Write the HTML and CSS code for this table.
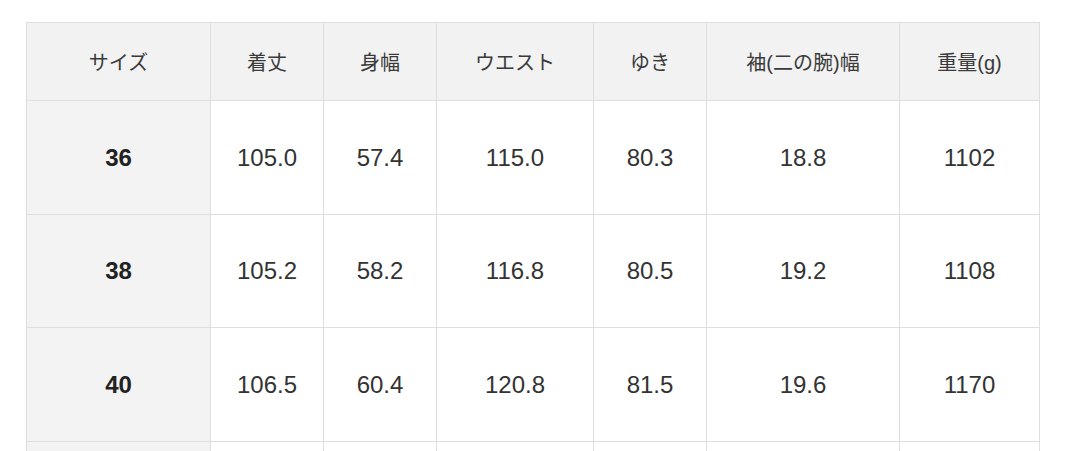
FILE: index.html
```html
<!DOCTYPE html>
<html lang="ja">
<head>
<meta charset="utf-8">
<title>サイズ表</title>
<link rel="stylesheet" href="styles.css">
</head>
<body>
<div class="wrap">
  <table class="size-table">
    <colgroup>
      <col class="c-size">
      <col class="c-n">
      <col class="c-n">
      <col class="c-w">
      <col class="c-n">
      <col class="c-s">
      <col class="c-g">
    </colgroup>
    <thead>
      <tr class="head-row">
        <th>サイズ</th>
        <th>着丈</th>
        <th>身幅</th>
        <th>ウエスト</th>
        <th>ゆき</th>
        <th>袖(二の腕)幅</th>
        <th>重量(g)</th>
      </tr>
    </thead>
    <tbody>
      <tr class="body-row">
        <th class="size">36</th>
        <td>105.0</td><td>57.4</td><td>115.0</td><td>80.3</td><td>18.8</td><td>1102</td>
      </tr>
      <tr class="body-row short">
        <th class="size">38</th>
        <td>105.2</td><td>58.2</td><td>116.8</td><td>80.5</td><td>19.2</td><td>1108</td>
      </tr>
      <tr class="body-row">
        <th class="size">40</th>
        <td>106.5</td><td>60.4</td><td>120.8</td><td>81.5</td><td>19.6</td><td>1170</td>
      </tr>
      <tr class="body-row">
        <th class="size"></th>
        <td></td><td></td><td></td><td></td><td></td><td></td>
      </tr>
    </tbody>
  </table>
</div>
</body>
</html>
```

FILE: styles.css
```css
html, body {
  margin: 0;
  padding: 0;
  background: #ffffff;
}

.wrap {
  padding: 22px 0 0 26px;
}

.size-table {
  border-collapse: collapse;
  table-layout: fixed;
  width: 1013px;
  font-family: "Liberation Sans", "Noto Sans CJK JP", sans-serif;
  color: #333333;
}

.c-size { width: 184px; }
.c-n { width: 113px; }
.c-w { width: 157px; }
.c-s { width: 193px; }
.c-g { width: 140px; }

.size-table th,
.size-table td {
  border: 1px solid #dedede;
  text-align: center;
  vertical-align: middle;
  padding: 0;
}

.head-row {
  height: 78px;
}

.head-row th {
  background: #f2f2f2;
  font-weight: 400;
  font-size: 20px;
  color: #3a3a3a;
}

.body-row {
  height: 114px;
}

.body-row.short {
  height: 113px;
}

.body-row td {
  font-size: 24px;
  background: #ffffff;
}

.body-row th.size {
  background: #f3f3f3;
  font-size: 24px;
  font-weight: 700;
  color: #222222;
}
```
